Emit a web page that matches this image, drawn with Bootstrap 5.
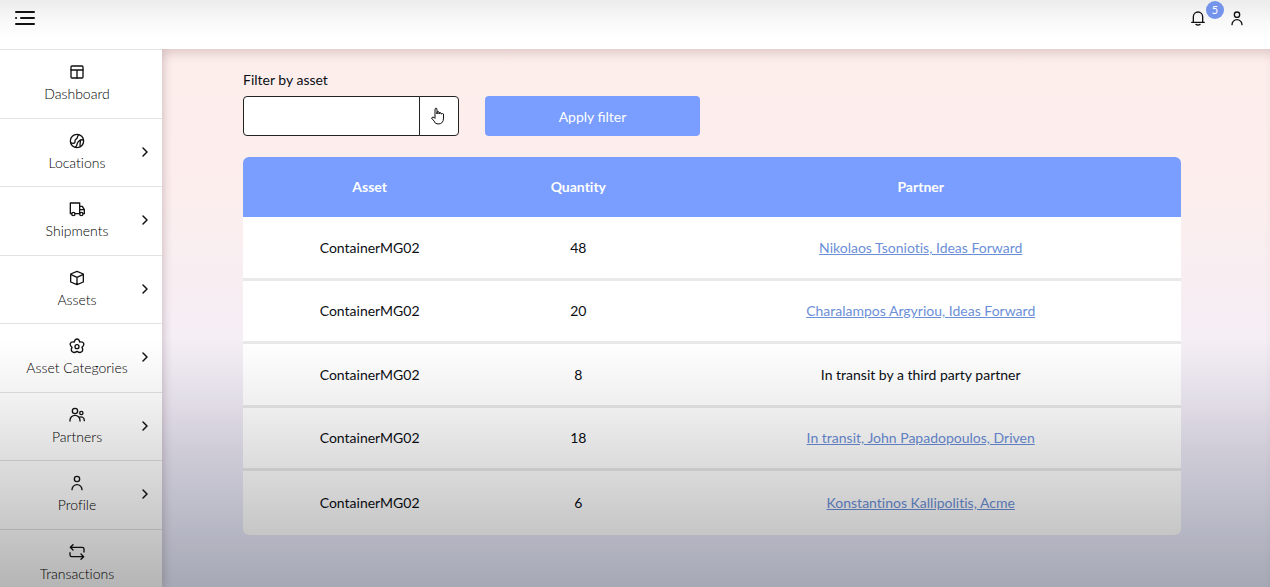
<!DOCTYPE html>
<html lang="en">
<head>
<meta charset="utf-8">
<meta name="viewport" content="width=device-width, initial-scale=1">
<title>Assets by partner</title>
<link href="https://cdn.jsdelivr.net/npm/bootstrap@5.3.0/dist/css/bootstrap.min.css" rel="stylesheet">
<style>
  :root { --app-blue: #799eff; }
  body { font-family: Lato, "Open Sans", sans-serif; font-size: 14px; line-height: 20px; color: #0b0e14; background: #fff; font-variant-ligatures: none; }
  svg { display: block; fill: none; stroke: #111; stroke-width: 2; stroke-linecap: round; stroke-linejoin: round; }
  .topbar { height: 49px; background: linear-gradient(#ececec, #f9f9f9 45%, #fff 80%); padding: 0 25px 14px 14px; }
  .icon-btn { padding: 0; border: 0; background: none; }
  .bell-count { left: 16px; top: -9px; width: 18px; height: 18px; font-size: 11px; line-height: 18px; background: #7394ea; color: #fff; }
  .header-tools { gap: 23px; }
  .side { width: 162px; background: #fff; box-shadow: 1px 0 10px rgba(60, 20, 40, .2); z-index: 1; }
  .side-item { height: 69px; padding: 14px 8px 0 0; border-top: 1px solid #e2e2e2; color: #000; font-weight: 300; text-decoration: none; }
  .side-item:nth-child(even) { height: 68px; }
  .side-item .chev { right: 12px; top: 26px; stroke-width: 1.5; }
  .content-area { padding: 21px 89px 52px 81px; background: linear-gradient(#fdeeec, #fceeed 26%, #f5eef5 54%, #ebe8f5 75%, #e9edff); box-shadow: inset 0 10px 12px -6px rgba(90, 40, 40, .2); }
  .filters { gap: 26px; margin-bottom: 21px; }
  .filters label { margin-bottom: 6px; }
  .pick { width: 216px; height: 40px; }
  .pick .form-control, .pick .btn { border: 1px solid #222; background: #fff; border-radius: 4px; }
  .pick .btn { width: 40px; padding: 0 4px 0 0; }
  .apply { width: 215px; height: 40px; padding: 0; border: 0; border-radius: 4px; font-size: 14px; color: #fff; background: var(--app-blue); }
  .apply:hover { color: #fff; background: #6a90f5; }
  .stock { --bs-table-bg: #fff; color: #0b0e14; table-layout: fixed; border-collapse: separate; border-spacing: 0; border-radius: 6px; overflow: hidden; }
  .stock th { height: 60px; padding: 0; background: var(--app-blue); color: #fff; border: 0; vertical-align: middle; }
  .stock td { height: 64px; padding: 0; border-bottom: 3px solid #e9e9e9; }
  .stock tr:nth-child(even) td { height: 63px; }
  .stock tr:last-child td { border-bottom: 0; }
  .stock a { color: #6c8fd8; }
  .c-asset { width: 27%; } .c-qty { width: 17.5%; }
  .shade { height: 42vh; z-index: 5; pointer-events: none; background: linear-gradient(rgba(0,0,0,0), rgba(0,0,0,.06) 25%, rgba(0,0,0,.29)); }
</style>
</head>
<body>
<div class="d-flex flex-column vh-100 overflow-hidden">
  <header class="topbar d-flex align-items-center justify-content-between flex-shrink-0">
    <button class="icon-btn" aria-label="Menu"><svg width="22" height="16" viewBox="0 0 22 16"><path d="M2 2h18M7 8h13M2 14h18M2 8h.1"/></svg></button>
    <div class="header-tools d-flex align-items-center">
      <button class="icon-btn position-relative" aria-label="Notifications"><svg width="16" height="16" viewBox="0 0 24 24"><path d="M5 18V10a7 7 0 0 1 14 0v8M2.500 18.500h19M9 21.500q3 2 6 0"/></svg><span class="bell-count position-absolute rounded-circle text-center">5</span></button>
      <button class="icon-btn" aria-label="Account"><svg width="16" height="16" viewBox="0 0 24 24"><circle cx="12" cy="7" r="4"/><path d="M4.500 22a7.500 7.500 0 0 1 15 0"/></svg></button>
    </div>
  </header>
  <div class="d-flex flex-grow-1 overflow-hidden">
    <nav class="side flex-shrink-0 overflow-hidden" aria-label="Main">
      <a href="#" class="side-item position-relative d-flex flex-column align-items-center gap-1"><svg width="16" height="16" viewBox="0 0 24 24"><rect x="3" y="3" width="18" height="18" rx="1.500"/><path d="M3 9h18M12 9v12"/></svg>Dashboard</a>
      <a href="#" class="side-item position-relative d-flex flex-column align-items-center gap-1"><svg width="16" height="16" viewBox="0 0 24 24"><circle cx="12" cy="12" r="10"/><path d="M2.500 14.500c5 2.500 7 .5 6.500-2.500s3-2.500 3.500-5 .5-3.500 2.500-4.500M9.500 21.500c3-2.500 2-5 4-8s4.500-4 8-3M17 20.500c-1.500-3 .5-6 0-10"/></svg>Locations<svg class="chev position-absolute" width="10" height="14" viewBox="0 0 10 14"><path d="M3 3l4 4-4 4"/></svg></a>
      <a href="#" class="side-item position-relative d-flex flex-column align-items-center gap-1"><svg width="16" height="16" viewBox="0 0 24 24"><path d="M4 19H2V3h14v16H9M16 8h4l3 5v6h-2M16 13h7"/><circle cx="6.500" cy="19.500" r="2.500"/><circle cx="18.500" cy="19.500" r="2.500"/></svg>Shipments<svg class="chev position-absolute" width="10" height="14" viewBox="0 0 10 14"><path d="M3 3l4 4-4 4"/></svg></a>
      <a href="#" class="side-item position-relative d-flex flex-column align-items-center gap-1"><svg width="16" height="16" viewBox="0 0 24 24"><path d="M12 2l9.500 4v12L12 22l-9.500-4V6zM2.500 6.500L12 11l9.500-4.500M12 11v11"/></svg>Assets<svg class="chev position-absolute" width="10" height="14" viewBox="0 0 10 14"><path d="M3 3l4 4-4 4"/></svg></a>
      <a href="#" class="side-item position-relative d-flex flex-column align-items-center gap-1"><svg width="16" height="16" viewBox="0 0 24 24"><path d="M8 6c1-6 7-6 8 0 7-1 8 4 3.500 8 3 6-1.500 10-7.500 6-6 4-10.500 0-7.500-6C0 10 1 5 8 6z"/><circle cx="12" cy="13" r="3"/></svg>Asset Categories<svg class="chev position-absolute" width="10" height="14" viewBox="0 0 10 14"><path d="M3 3l4 4-4 4"/></svg></a>
      <a href="#" class="side-item position-relative d-flex flex-column align-items-center gap-1"><svg width="16" height="16" viewBox="0 0 24 24"><circle cx="9" cy="6" r="4"/><circle cx="18.500" cy="9" r="2.500"/><path d="M1.500 21v-1a7.500 7.500 0 0 1 15 0v1M15 15.500c4-2 8 0 8 5"/></svg>Partners<svg class="chev position-absolute" width="10" height="14" viewBox="0 0 10 14"><path d="M3 3l4 4-4 4"/></svg></a>
      <a href="#" class="side-item position-relative d-flex flex-column align-items-center gap-1"><svg width="16" height="16" viewBox="0 0 24 24"><circle cx="12" cy="6" r="4"/><path d="M4.500 22a7.500 7.500 0 0 1 15 0"/></svg>Profile<svg class="chev position-absolute" width="10" height="14" viewBox="0 0 10 14"><path d="M3 3l4 4-4 4"/></svg></a>
      <a href="#" class="side-item position-relative d-flex flex-column align-items-center gap-1"><svg width="16" height="16" viewBox="0 0 24 24"><path d="M6 1L2 5l4 4M2 5h18q2.500 0 2.500 2.500V12M18 15l4 4-4 4M22 19H4q-2.500 0-2.500-2.500V13"/></svg>Transactions</a>
    </nav>
    <main class="content-area flex-grow-1 overflow-hidden">
      <form class="filters d-flex flex-wrap align-items-end">
        <div>
          <label for="asset" class="d-block">Filter by asset</label>
          <div class="input-group pick">
            <input id="asset" type="text" class="form-control">
            <button type="button" class="btn d-flex align-items-center justify-content-center" aria-label="Choose asset"><svg width="15" height="18" viewBox="0 0 15 18" stroke-width="1"><g stroke-width="1"><path d="M5 10V3q0-2 1-2t1 2v4V5q1.500-1 2 0v2V6q1.500-1 2 0v1q2-1 2.500 0v4q0 6-5.500 6-3 0-4-3L1.500 11q1-2 3.500 0z"/></g></svg></button>
          </div>
        </div>
        <button type="button" class="btn apply">Apply filter</button>
      </form>
      <table class="table stock text-center align-middle mb-0">
        <thead><tr><th class="c-asset" scope="col">Asset</th><th class="c-qty" scope="col">Quantity</th><th scope="col">Partner</th></tr></thead>
        <tbody>
          <tr><td>ContainerMG02</td><td>48</td><td><a href="#">Nikolaos Tsoniotis, Ideas Forward</a></td></tr>
          <tr><td>ContainerMG02</td><td>20</td><td><a href="#">Charalampos Argyriou, Ideas Forward</a></td></tr>
          <tr><td>ContainerMG02</td><td>8</td><td>In transit by a third party partner</td></tr>
          <tr><td>ContainerMG02</td><td>18</td><td><a href="#">In transit, John Papadopoulos, Driven</a></td></tr>
          <tr><td>ContainerMG02</td><td>6</td><td><a href="#">Konstantinos Kallipolitis, Acme</a></td></tr>
        </tbody>
      </table>
    </main>
  </div>
</div>
<div class="shade fixed-bottom"></div>
<script src="https://cdn.jsdelivr.net/npm/bootstrap@5.3.0/dist/js/bootstrap.bundle.min.js"></script>
</body>
</html>
